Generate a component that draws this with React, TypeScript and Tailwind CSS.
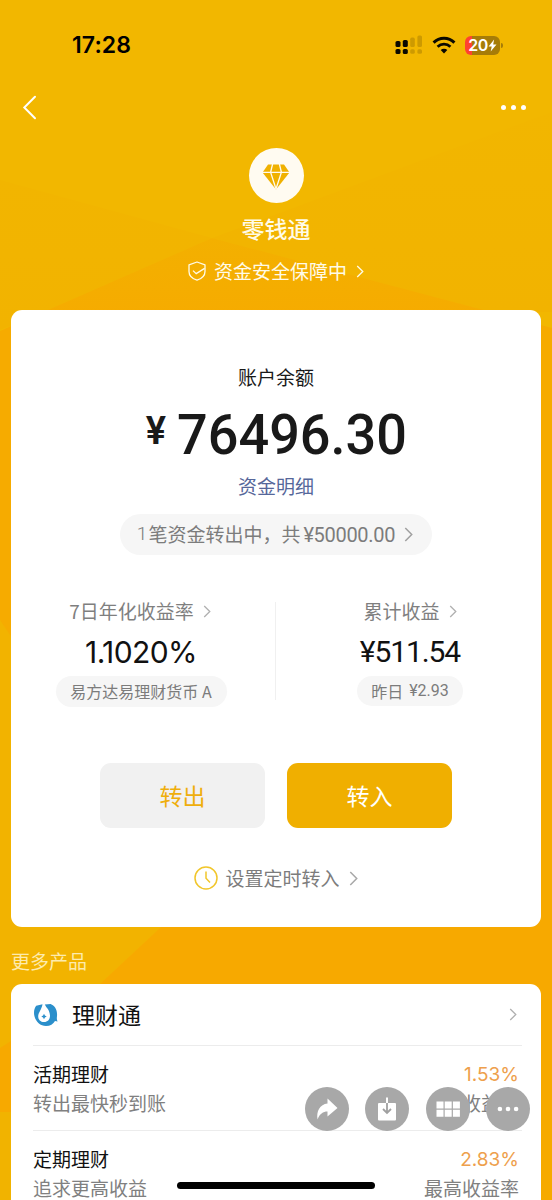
import clsx from 'clsx';

interface Product {
    name: string;
    desc: string;
    rate: string;
    rateLabel: string;
}

const products: Product[] = [
    { name: '活期理财', desc: '转出最快秒到账', rate: '1.53%', rateLabel: '收益率' },
    { name: '定期理财', desc: '追求更高收益', rate: '2.83%', rateLabel: '最高收益率' },
];

function Chevron({ className }: { className?: string }) {
    return (
        <svg viewBox="0 0 8 14" fill="none" stroke="currentColor" className={clsx('shrink-0', className)}>
            <path d="M1 1l6 6-6 6" strokeWidth="1.4" />
        </svg>
    );
}

// Soft low-poly facets behind the cards
function Backdrop() {
    return (
        <svg
            className="absolute inset-0 h-[1200px] w-[552px]"
            viewBox="0 0 552 1200"
            preserveAspectRatio="none"
        >
            <defs>
                <linearGradient id="facetLeft" x1="0" y1="0" x2="0" y2="1">
                    <stop offset="0" stopColor="#f2b500" />
                    <stop offset="1" stopColor="#f2b300" />
                </linearGradient>
                <linearGradient id="facetRight" x1="0" y1="0" x2="0" y2="1">
                    <stop offset="0" stopColor="#f2b600" />
                    <stop offset="1" stopColor="#f2b300" />
                </linearGradient>
                <linearGradient id="facetCenter" gradientUnits="userSpaceOnUse" x1="0" y1="238" x2="0" y2="320">
                    <stop offset="0" stopColor="#f3b000" />
                    <stop offset="1" stopColor="#f6ab00" />
                </linearGradient>
            </defs>
            <rect width="552" height="1200" fill="#f2b700" />
            <path d="M0 180L212 238L30 318L0 330Z" fill="url(#facetLeft)" />
            <path d="M552 112L212 238L490 312H552Z" fill="url(#facetRight)" />
            <path d="M212 238L0 331V640L170 900L552 1000V328Z" fill="url(#facetCenter)" />
            <path d="M0 620L190 900L100 984L0 1050Z" fill="#f2b300" />
            <path d="M190 900L100 984L0 1048V1116H552V900Z" fill="#f7a900" />
            <path d="M0 1112H30V1200H0Z" fill="#f1b300" />
            <path d="M520 1100H552V1200H520Z" fill="#f6aa00" />
        </svg>
    );
}

function StatusBar() {
    return (
        <div className="flex h-[90px] items-center justify-between pr-[49px] pl-[72px]">
            <span className="font-['Inter',sans-serif] text-[23px] font-semibold tracking-[0.1px] text-black">
                17:28
            </span>
            <div className="flex items-center">
                <svg width="28" height="20" viewBox="0 0 28 20">
                    <g fill="#0b0900">
                        <rect x="0.5" y="6" width="5" height="6" rx="1.6" />
                        <rect x="7.8" y="5" width="5" height="7" rx="1.6" />
                        <rect x="0.5" y="14" width="5" height="5" rx="1.6" />
                        <rect x="7.8" y="14" width="5" height="5" rx="1.6" />
                    </g>
                    <g fill="#cd9a00">
                        <rect x="15.2" y="2.6" width="4.6" height="9.4" rx="1.6" />
                        <rect x="22.4" y="0.5" width="4.6" height="11.5" rx="1.6" />
                        <rect x="15.2" y="14.2" width="4.6" height="4.6" rx="1.6" />
                        <rect x="22.4" y="14.2" width="4.6" height="4.6" rx="1.6" />
                    </g>
                </svg>
                <svg width="24" height="18" viewBox="0 0 24 18" className="ml-[9px]" fill="none" stroke="#0b0900">
                    <path d="M1.6 6.6a14.8 14.8 0 0 1 20.8 0" strokeWidth="3" />
                    <path d="M5.6 10.7a9.2 9.2 0 0 1 12.8 0" strokeWidth="2.8" />
                    <path d="M12 17.4l-3.3-3.3a4.7 4.7 0 0 1 6.6 0z" fill="#0b0900" stroke="none" />
                </svg>
                <div className="ml-[9px] flex h-[19px] w-[35px] items-center justify-center rounded-[6px] bg-[linear-gradient(90deg,#ff4130_20%,#a67c08_20%)] text-white">
                    <span className="font-['Inter',sans-serif] text-[16px] leading-none font-semibold tracking-[-0.6px]">
                        20
                    </span>
                    <svg width="9" height="13" viewBox="0 0 8 13" fill="currentColor">
                        <path d="M5.6 0.5L0.1 7.4h3.1L2.2 12.5 8 5.4H4.7z" />
                    </svg>
                </div>
                <span className="ml-px h-[5px] w-[2px] rounded-r-full bg-[#a67c08]" />
            </div>
        </div>
    );
}

function NavBar() {
    return (
        <div className="flex h-[34px] items-center justify-between pr-[26px] pl-[22px] text-white">
            <svg width="15" height="25" viewBox="0 0 15 25" fill="none" stroke="currentColor">
                <path d="M13 1.8L2.3 12.5 13 23.2" strokeWidth="2" strokeLinecap="round" />
            </svg>
            <div className="flex gap-[5px]">
                <span className="size-[5px] rounded-full bg-white" />
                <span className="size-[5px] rounded-full bg-white" />
                <span className="size-[5px] rounded-full bg-white" />
            </div>
        </div>
    );
}

function Header() {
    return (
        <div className="flex h-[186px] flex-col items-center pt-[24px]">
            <div className="flex size-[55px] items-center justify-center rounded-full bg-[#fffbf1]">
                <svg width="28" height="26" viewBox="0 0 28 26" className="mt-[2px]">
                    <path d="M6 0.5H22L27.5 8.5L14 25.5L0.5 8.5Z" fill="#f0b100" />
                    <path
                        d="M0 8.3H28M10.6 0L8.6 8.3L14 25M17.4 0L19.4 8.3L14 25"
                        fill="none"
                        stroke="#fffbf1"
                        strokeWidth="1.3"
                    />
                </svg>
            </div>
            <h1 className="mt-[8px] text-[23px] leading-[34px] font-medium text-[#fffbe8]">零钱通</h1>
            <div className="mt-[10px] flex h-8 items-center text-[#fffbe8]">
                <svg width="18" height="20" viewBox="0 0 18 20" fill="none" stroke="currentColor" strokeWidth="1.3">
                    <path d="M9 1L17 3.8V10.5C17 14.6 13.8 17.6 9 19.2C4.2 17.6 1 14.6 1 10.5V3.8Z" strokeLinejoin="round" />
                    <path d="M5 9.6L8.2 12.6L16.6 7.4" />
                </svg>
                <span className="ml-2 text-[19px]">资金安全保障中</span>
                <Chevron className="ml-[9px] h-[13px] w-[8px]" />
            </div>
        </div>
    );
}

function BalanceCard() {
    return (
        <section className="mx-[11px] flex h-[617px] flex-col items-center rounded-[11px] bg-white pt-[52px]">
            <p className="text-[19px] leading-[29px] text-[#191919]">账户余额</p>
            <div className="flex h-[87px] items-center font-['Roboto',sans-serif] font-medium text-[#191919]">
                <span className="mr-[11px] mb-[7px] text-[38px] leading-none font-semibold">¥</span>
                <span className="-mr-[9px] origin-left scale-x-[0.965] text-[56px] leading-none">
                    76496.30
                </span>
            </div>
            <a className="text-[19px] leading-[16px] text-[#56679a]">资金明细</a>
            <div className="mt-[20px] flex h-[41px] w-[312px] items-center justify-center rounded-full bg-[#f6f6f6] text-[19px] text-[#7c7c7c]">
                <span className="font-['Roboto',sans-serif] font-light">1</span>
                <span className="ml-px">笔资金转出中，共</span>
                <span className="ml-[3px] font-['Roboto',sans-serif] text-[20px] tracking-[-0.3px]">¥50000.00</span>
                <Chevron className="mr-[2px] ml-[9px] h-[15px] w-[9px] text-[#a0a0a0]" />
            </div>

            <div className="mt-[40px] flex w-full">
                <div className="flex w-[264px] flex-col items-center pr-1">
                    <div className="flex h-8 items-center text-[19px] text-[#7f7f7f]">
                        <span>7日年化收益率</span>
                        <Chevron className="mr-[2px] ml-[9px] h-[13px] w-[8px] text-[#b0b0b0]" />
                    </div>
                    <p className="font-['Inter',sans-serif] text-[30px] leading-[51px] tracking-[-0.6px] text-[#111]">
                        1.1020%
                    </p>
                    <span className="-mt-[2px] flex h-[31px] w-[171px] items-center justify-center rounded-full bg-[#f6f6f6] pb-px text-[16px] text-[#7c7c7c]">
                        易方达易理财货币 A
                    </span>
                </div>
                <div className="my-[7px] w-px bg-[#f0f0f0]" />
                <div className="flex flex-1 flex-col items-center pl-[3px]">
                    <div className="flex h-8 items-center text-[19px] text-[#7f7f7f]">
                        <span>累计收益</span>
                        <Chevron className="ml-[9px] h-[13px] w-[8px] text-[#b0b0b0]" />
                    </div>
                    <p className="font-['Roboto',sans-serif] text-[30px] leading-[49px] tracking-[-1.1px] text-[#111]">
                        ¥511.54
                    </p>
                    <span className="flex h-[30px] w-[106px] items-center justify-center rounded-full bg-[#f6f6f6] text-[16px] text-[#7c7c7c]">
                        昨日
                        <span className="ml-[6px] font-['Roboto',sans-serif]">¥2.93</span>
                    </span>
                </div>
            </div>

            <div className="mt-[56px] flex gap-[22px]">
                <button className="h-[65px] w-[165px] rounded-[11px] bg-[#f1f1f1] text-[23px] text-[#efae0c]">
                    转出
                </button>
                <button className="h-[65px] w-[165px] rounded-[11px] bg-[#f0af00] text-[23px] text-white">
                    转入
                </button>
            </div>

            <div className="mt-[35px] flex h-[30px] items-center text-[19px] text-[#7c7c7c]">
                <svg width="24" height="24" viewBox="0 0 24 24" fill="none" stroke="#f1c62b" strokeWidth="1.5">
                    <circle cx="12" cy="12" r="11" />
                    <path d="M12 5.5V12.2L16 16.5" />
                </svg>
                <span className="ml-[7px]">设置定时转入</span>
                <Chevron className="ml-[9px] h-[15px] w-[9px] text-[#a8a8a8]" />
            </div>
        </section>
    );
}

function ProductList() {
    return (
        <section className="mx-[11px] rounded-t-[11px] bg-white pr-[19px] pl-[22px]">
            <div className="flex h-[62px] items-center border-b border-[#ececec]">
                <svg width="26" height="24" viewBox="0 0 26 24">
                    <path
                        d="M9.5 1.2L3.2 2.8C1.2 5.6 0.6 8.8 1.3 12.5C2.6 18.8 7.3 23 13 23C17.2 23 20.3 21 22 18L24.6 18.6C23.6 17 23.8 15.4 24 13C24.6 7 21.8 2.6 17.6 1L11.8 1.4L13.4 4.2C15.6 6.4 16.8 9 17 12.6C17 16.6 14.6 19 11.2 19C7.4 19 5.2 16.4 5.2 13.4C5.2 9.6 8.9 5.8 9.5 1.2Z"
                        fill="#2b8fcb"
                    />
                    <path d="M11 10.8l.9 1.8 1.8.9-1.8.9-.9 1.8-.9-1.8-1.8-.9 1.8-.9z" fill="#2b8fcb" />
                </svg>
                <span className="ml-[13px] text-[23px] text-[#111]">理财通</span>
                <Chevron className="mr-[5px] ml-auto h-[13px] w-[8px] text-[#b0b0b0]" />
            </div>
            {products.map((product) => (
                <div
                    key={product.name}
                    className="flex h-[85px] justify-between border-b border-[#ececec] pt-[13px] pr-[3px] text-[19px] leading-[29px]"
                >
                    <div>
                        <p className="text-[#111]">{product.name}</p>
                        <p className="text-[#808080]">{product.desc}</p>
                    </div>
                    <div className="text-right">
                        <p className="pt-[2px] font-['Inter',sans-serif] leading-[27px] text-[#eea04c]">
                            {product.rate}
                        </p>
                        <p className="text-[#808080]">{product.rateLabel}</p>
                    </div>
                </div>
            ))}
        </section>
    );
}

// Viewer controls floating over the list
function FloatingActions() {
    const circle = 'flex size-[44px] items-center justify-center rounded-full bg-[#a8a8a8] text-white';

    return (
        <div className="absolute top-[1087px] left-[305px] flex gap-[16.4px]">
            <button className={circle}>
                <svg width="22" height="22" viewBox="0 0 22 22" fill="currentColor">
                    <path d="M11.5 0.5L21.5 10L11.5 18.5V13.6C7 13.6 3.6 16 1.6 21.5C0 13.5 4 6.4 11.5 5.6Z" />
                </svg>
            </button>
            <button className={circle}>
                <svg width="20" height="24" viewBox="0 0 20 24">
                    <rect x="1" y="6" width="18" height="17.5" rx="1" fill="#fff" />
                    <path d="M10 0.5V6" stroke="#fff" strokeWidth="2" />
                    <path d="M10 6V15.5M6 12L10 16L14 12" fill="none" stroke="#a0a0a0" strokeWidth="1.8" />
                </svg>
            </button>
            <button className={circle}>
                <svg width="24" height="16" viewBox="0 0 24 16" fill="currentColor">
                    <path d="M0.5 0.5h7v7h-7zM8.7 0.5h7v7h-7zM16.9 0.5h7v7h-7zM0.5 8.7h7v7h-7zM8.7 8.7h7v7h-7zM16.9 8.7h7v7h-7z" />
                </svg>
            </button>
            <button className={circle}>
                <svg width="22" height="6" viewBox="0 0 22 6" fill="currentColor">
                    <circle cx="2.9" cy="3" r="2.3" />
                    <circle cx="11" cy="3" r="2.3" />
                    <circle cx="19.1" cy="3" r="2.3" />
                </svg>
            </button>
        </div>
    );
}

export default function App() {
    return (
        <div className="relative h-[1200px] w-[552px] overflow-hidden bg-[#f2b700] font-['Noto_Sans_CJK_SC',sans-serif]">
            <Backdrop />
            <main className="relative">
                <StatusBar />
                <NavBar />
                <Header />
                <BalanceCard />
                <h2 className="h-[57px] pt-[19px] pl-[11px] text-[19px] leading-[29px] text-[#fdebae]">更多产品</h2>
                <ProductList />
            </main>
            <FloatingActions />
            <div className="absolute top-[1182px] left-[177px] h-[7px] w-[198px] rounded-full bg-black" />
        </div>
    );
}
